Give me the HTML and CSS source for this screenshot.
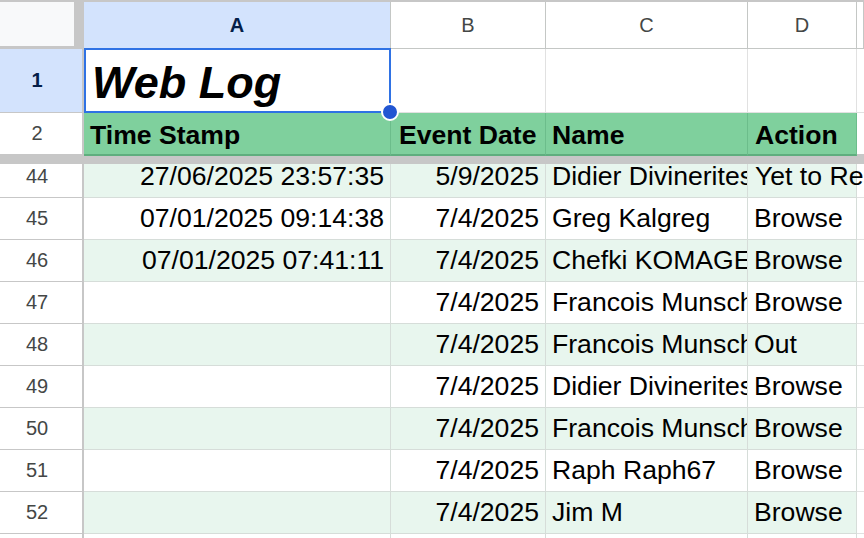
FILE: index.html
```html
<!DOCTYPE html>
<html lang="en">
<head>
<meta charset="UTF-8" />
<title>Web Log</title>
<link rel="stylesheet" href="styles.css">
</head>
<body>
<div class="sheet">
  <!-- column letters -->
  <div class="row col-heads">
    <div class="corner"></div>
    <div class="col-head sel">A</div>
    <div class="col-head">B</div>
    <div class="col-head">C</div>
    <div class="col-head">D</div>
    <div class="col-head edge"></div>
  </div>
  <!-- frozen rows -->
  <div class="row title-row">
    <div class="row-head sel">1</div>
    <div class="cell title">Web Log
      <span class="sel-box"><span class="sel-dot"></span></span>
    </div>
    <div class="cell"></div>
    <div class="cell"></div>
    <div class="cell"></div>
    <div class="cell edge"></div>
  </div>
  <div class="row table-head">
    <div class="row-head">2</div>
    <div class="cell">Time Stamp</div>
    <div class="cell">Event Date</div>
    <div class="cell">Name</div>
    <div class="cell">Action</div>
    <div class="cell edge"></div>
  </div>
  <div class="freeze"></div>
  <!-- scrolled body -->
  <div class="scroll">
    <div class="scroll-inner">
      <div class="row data alt">
        <div class="row-head">44</div>
        <div class="cell num">27/06/2025 23:57:35</div>
        <div class="cell num">5/9/2025</div>
        <div class="cell clip">Didier Divinerites</div>
        <div class="cell spill">Yet to Respond</div>
        <div class="cell edge"></div>
      </div>
      <div class="row data">
        <div class="row-head">45</div>
        <div class="cell num">07/01/2025 09:14:38</div>
        <div class="cell num">7/4/2025</div>
        <div class="cell clip">Greg Kalgreg</div>
        <div class="cell">Browse</div>
        <div class="cell edge"></div>
      </div>
      <div class="row data alt">
        <div class="row-head">46</div>
        <div class="cell num">07/01/2025 07:41:11</div>
        <div class="cell num">7/4/2025</div>
        <div class="cell clip">Chefki KOMAGER</div>
        <div class="cell">Browse</div>
        <div class="cell edge"></div>
      </div>
      <div class="row data">
        <div class="row-head">47</div>
        <div class="cell num"></div>
        <div class="cell num">7/4/2025</div>
        <div class="cell clip">Francois Munschy</div>
        <div class="cell">Browse</div>
        <div class="cell edge"></div>
      </div>
      <div class="row data alt">
        <div class="row-head">48</div>
        <div class="cell num"></div>
        <div class="cell num">7/4/2025</div>
        <div class="cell clip">Francois Munschy</div>
        <div class="cell">Out</div>
        <div class="cell edge"></div>
      </div>
      <div class="row data">
        <div class="row-head">49</div>
        <div class="cell num"></div>
        <div class="cell num">7/4/2025</div>
        <div class="cell clip">Didier Divinerites</div>
        <div class="cell">Browse</div>
        <div class="cell edge"></div>
      </div>
      <div class="row data alt">
        <div class="row-head">50</div>
        <div class="cell num"></div>
        <div class="cell num">7/4/2025</div>
        <div class="cell clip">Francois Munschy</div>
        <div class="cell">Browse</div>
        <div class="cell edge"></div>
      </div>
      <div class="row data">
        <div class="row-head">51</div>
        <div class="cell num"></div>
        <div class="cell num">7/4/2025</div>
        <div class="cell clip">Raph Raph67</div>
        <div class="cell">Browse</div>
        <div class="cell edge"></div>
      </div>
      <div class="row data alt">
        <div class="row-head">52</div>
        <div class="cell num"></div>
        <div class="cell num">7/4/2025</div>
        <div class="cell clip">Jim M</div>
        <div class="cell">Browse</div>
        <div class="cell edge"></div>
      </div>
      <div class="row data">
        <div class="row-head">53</div>
        <div class="cell"></div>
        <div class="cell"></div>
        <div class="cell"></div>
        <div class="cell"></div>
        <div class="cell edge"></div>
      </div>
    </div>
  </div>
</div>
</body>
</html>
```

FILE: styles.css
```css
:root {
  --bar: #c7c7c7;
  --head-line: #c4c7c5;
  --grid: #e1e1e1;
  --sel-bg: #d3e3fd;
  --sel-text: #041e49;
  --sel-blue: #2f72e4;
  --green: #7fd09d;
  --green-line: #6cbd8b;
  --green-edge: #5fae7e;
  --alt: #e8f6ee;
  --alt-line: #d6ddd9;
}
* { box-sizing: border-box; }
html, body {
  margin: 0;
  width: 864px;
  height: 538px;
  overflow: hidden;
  background: #fff;
}
body {
  font-family: "Liberation Sans", Arial, sans-serif;
  color: #000;
}
.sheet {
  width: 864px;
  height: 538px;
  overflow: hidden;
  border-top: 2px solid var(--bar);
}
.row {
  display: grid;
  grid-template-columns: 84px 307px 155px 202px 109px 100px;
}
.cell {
  display: flex;
  align-items: center;
  padding: 0 6px;
  font-size: 26.6px;
  white-space: nowrap;
  border-right: 1px solid var(--grid);
  border-bottom: 1px solid var(--grid);
  min-width: 0;
}
.cell.num { justify-content: flex-end; }
.cell.clip { overflow: hidden; }
.cell.spill { overflow: visible; padding-left: 7px; }
.cell.edge { border-right: none; }

/* column letters */
.col-heads { height: 47px; }
.corner {
  background: #f8f9fa;
  border-right: 10px solid var(--bar);
  border-bottom: 3px solid var(--bar);
}
.col-head {
  display: flex;
  align-items: center;
  justify-content: center;
  font-size: 20px;
  color: #444746;
  border-right: 1px solid var(--head-line);
  border-bottom: 1px solid var(--head-line);
}
.col-head.sel {
  background: var(--sel-bg);
  color: var(--sel-text);
  font-weight: 700;
}
.col-head.edge { border-right: 1px solid var(--head-line); width: 7px; }

/* row numbers, centred under the corner box */
.row-head {
  display: flex;
  align-items: center;
  justify-content: center;
  padding-right: 8px;
  font-size: 20px;
  color: #444746;
  background: #fff;
  border-right: 2px solid var(--bar);
  border-bottom: 1px solid var(--bar);
}
.row-head.sel {
  background: var(--sel-bg);
  color: var(--sel-text);
  font-weight: 700;
}

/* title row with the selected cell */
.title-row { height: 64px; }
.title-row .cell.edge { border-right: 1px solid var(--grid); width: 7px; }
.cell.title {
  position: relative;
  align-items: flex-end;
  padding: 0 6px 3px 8px;
  font-size: 45px;
  font-weight: 700;
  font-style: italic;
}
.sel-box {
  position: absolute;
  left: 0;
  top: -1px;
  right: -1px;
  bottom: -1px;
  border: 2px solid var(--sel-blue);
  pointer-events: none;
  z-index: 2;
}
.sel-dot {
  position: absolute;
  right: -10px;
  bottom: -10px;
  width: 18px;
  height: 18px;
  border-radius: 50%;
  background: #2256d2;
  border: 2px solid #fff;
}

/* green table header */
.table-head { height: 43px; }
.table-head .row-head { border-bottom: 2px solid var(--bar); }
.table-head .cell {
  padding-top: 3px;
  font-weight: 700;
  background: var(--green);
  border-right-color: var(--green-line);
  border-bottom: 2px solid var(--green-edge);
}
.table-head .cell:nth-child(3) { padding-left: 8px; }
.table-head .cell:nth-child(5) { padding-left: 7px; }
.table-head .cell.edge {
  background: #fff;
  border-bottom: 2px solid var(--bar);
}

.freeze {
  height: 8px;
  background: var(--bar);
}

/* scrolled rows, first one partly under the freeze bar */
.scroll {
  height: 374px;
  overflow: hidden;
}
.scroll-inner { margin-top: -8px; }
.data { height: 42px; }
.data .cell {
  border-right-color: var(--alt-line);
  border-bottom-color: var(--alt-line);
}
.data .cell.edge {
  background: transparent;
  border-bottom-color: var(--grid);
}
.data.alt .cell { background: var(--alt); }
.data.alt .cell.edge { background: transparent; }
```
